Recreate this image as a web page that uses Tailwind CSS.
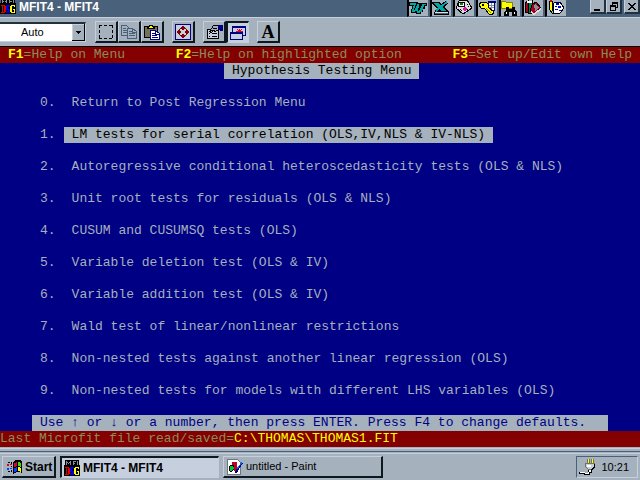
<!DOCTYPE html>
<html lang="en">
<head>
    <meta charset="UTF-8" />
    <meta name="viewport" content="width=device-width, initial-scale=1.0"/>
    <title>MFIT4 - MFIT4</title>
    <script src="https://cdn.jsdelivr.net/npm/@tailwindcss/browser@4"></script>
</head>
<body class="flex min-h-screen flex-col overflow-x-hidden bg-[#a5b1bd] font-['Liberation_Sans',sans-serif] text-[11px] text-black">

<!-- Title bar -->
<header class="flex h-[18px] items-start border-b border-[#c6cfde] bg-[#4a617b]">
    <svg class="h-[14px] w-4 shrink-0" viewBox="0 0 16 14" shape-rendering="crispEdges">
        <path fill="#000" d="M1 0h14v3h1v11H0V3h1z"/>
        <path fill="#84919c" d="M2 0h1v3H2zM3 1h1v1H3zM5 1h1v1H5zM6 0h1v3H6zM9 0h1v3H9zM10 1h2v1h-2zM13 0h1v3h-1z"/>
        <path fill="#e00000" d="M1 5h4v1h1v6H5v1H1v-1h1V6H1zM3 6v6h1V6z"/>
        <path fill="#0000e0" d="M6 5h4v2H8v2h2v4H6v-2h2v-1H6z"/>
        <path fill="#ffff00" d="M11 5h4v2h-1V6h-2v6h2v-2h-1V9h2v4h-4v-1h-1V6h1z"/>
    </svg>
    <h1 class="ml-[3px] grow text-[12px] leading-[14px] font-bold whitespace-nowrap text-white">MFIT4 - MFIT4</h1>

    <nav aria-label="Office shortcuts" class="mr-[22px] flex bg-black">
        <button aria-label="Word" class="h-[17px] w-[23px] border-r-2 border-b border-l-2 border-r-[#4a617b] border-b-[#4a617b] border-l-black bg-[#a5b1bd]">
            <svg class="h-4 w-[19px]" viewBox="0 0 19 16" shape-rendering="crispEdges">
                <path fill="#000" d="M0 2h9v1h9v3h-2v3h-2v3h-2v2H7v-1H2V9h1V6H0z"/>
                <path fill="#00a5a5" d="M1 3h6v2H6v3H5v2h1V8h1V6h1V4h2v4H9v3h1v-1h1V8h1V6h1V4h4v1h-2v2h-1v3h-1v2h-2v1H8v-2H6v1H3V9h1V6h1V5H1z"/>
                <path fill="#a5b1bd" d="M14 13h4v2h-4zM0 7h2v4H0z"/>
            </svg>
        </button>
        <button aria-label="Excel" class="h-[17px] w-[23px] border-r-2 border-b border-l-2 border-r-[#4a617b] border-b-[#4a617b] border-l-black bg-[#a5b1bd]">
            <svg class="h-4 w-[19px]" viewBox="0 0 19 16" shape-rendering="crispEdges">
                <path fill="none" stroke="#000" stroke-width="4" d="M15 2L4 12"/>
                <path fill="#000" d="M0 2h7l3 3 6 6h1v4H2v-3l3-3-5-5z"/>
                <path fill="none" stroke="#00a5a5" stroke-width="2" d="M15 2L4 11"/>
                <path fill="#00a5a5" d="M1 3h5l9 8h-5z"/>
                <path fill="#dedede" d="M3 12h13v2H3z"/>
                <path fill="#4a617b" d="M3 13h13v1H3z"/>
            </svg>
        </button>
        <button aria-label="PowerPoint" class="h-[17px] w-[23px] border-r-2 border-b border-l-2 border-r-[#4a617b] border-b-[#4a617b] border-l-black bg-[#a5b1bd]">
            <svg class="h-4 w-[19px]" viewBox="0 0 19 16" shape-rendering="crispEdges">
                <path fill="#dedede" stroke="#000" d="M4 1l8-1 5 8-9 6-7-6z"/>
                <path fill="#fff" stroke="#000" d="M3.500 2.500h6v4h-6z"/>
                <path fill="#008400" d="M5 3h3v2H5z"/>
                <path fill="#e010b0" d="M8 8h4v2H8zM9 7h2v4H9z"/>
                <path fill="#000" d="M5 9h1v1H5zM6 10h1v1H6zM12 4h1v1h-1zM13 6h1v1h-1zM12 9h1v1h-1zM9 12h1v1H9z"/>
            </svg>
        </button>
        <button aria-label="Access" class="h-[17px] w-[23px] border-r-2 border-b border-l-2 border-r-[#4a617b] border-b-[#4a617b] border-l-black bg-[#a5b1bd]">
            <svg class="h-4 w-[19px]" viewBox="0 0 19 16" shape-rendering="crispEdges">
                <path fill="#fff" stroke="#000080" d="M10.500 2.500h6v8h-6z"/>
                <path fill="#000080" d="M10 1h8v2h-8z"/>
                <path fill="#84919c" d="M11 5h5v1h-5zM11 7h5v1h-5zM13 3h1v7h-1z"/>
                <path fill="#ffff00" stroke="#000" d="M3 2h5l2 2v3l6 5-2 3-3-1-4-5-4-1-2-3z"/>
                <path fill="#000" d="M4 4h2v2H4z"/>
                <path fill="none" stroke="#848400" d="M8 8l5 5"/>
            </svg>
        </button>
        <button aria-label="Find file" class="h-[17px] w-[23px] border-r-2 border-b border-l-2 border-r-[#4a617b] border-b-[#4a617b] border-l-black bg-[#a5b1bd]">
            <svg class="h-4 w-[19px]" viewBox="0 0 19 16" shape-rendering="crispEdges">
                <path fill="#ffff00" stroke="#848400" d="M.5 1.500h4l1 1h6v6H.5z"/>
                <path fill="#000" d="M5 7h3v2h3V7h3v3l2 2v4h-5v-4H8v4H3v-4l2-2z"/>
                <path fill="#fff" d="M5 12h1v2H5zM13 12h1v2h-1z"/>
            </svg>
        </button>
        <button aria-label="Books" class="h-[17px] w-[23px] border-r-2 border-b border-l-2 border-r-[#4a617b] border-b-[#4a617b] border-l-black bg-[#a5b1bd]">
            <svg class="h-4 w-[19px]" viewBox="0 0 19 16" shape-rendering="crispEdges">
                <path fill="#a50021" stroke="#000" d="M1 3l3-2v11l-3 1z"/>
                <path fill="#008442" stroke="#000" d="M4 2l4-1v12H4z"/>
                <path fill="#fff" d="M3 1h5v2H3z"/>
                <path fill="#a50021" stroke="#000" d="M8 5l4-3 5 6-7 6-4-3z"/>
                <path fill="#dedede" d="M7 11l3 2 7-5v2l-7 5-3-2z"/>
                <path fill="#84919c" d="M10 5l2-1 3 4-4 3z"/>
            </svg>
        </button>
        <button aria-label="Notes" class="h-[17px] w-[23px] border-r-2 border-b border-l-2 border-r-[#4a617b] border-b-[#4a617b] border-l-black bg-[#a5b1bd]">
            <svg class="h-4 w-[19px]" viewBox="0 0 19 16" shape-rendering="crispEdges">
                <path fill="#fff" stroke="#000" d="M7 3l6-1 4 6-4 5H6z"/>
                <path fill="#0000d0" d="M9 3h3v2H9zM8 6h2v1H8zM11 6h3v2h-3zM8 9h3v1H8zM12 10h2v1h-2z"/>
                <path fill="#ffff00" stroke="#000" d="M2.500 1.500h3v8l-1 3-2-3z"/>
                <path fill="#d00000" d="M3 0h2v2H3z"/>
            </svg>
        </button>
    </nav>

    <div class="flex h-[14px]">
        <button aria-label="Minimize" class="flex h-[14px] w-4 items-end border-r-2 border-b-2 border-l border-r-[#21313f] border-b-[#21313f] border-l-[#c6cfde] bg-[#a5b1bd] pb-[1px] pl-[3px]">
            <span class="h-[2px] w-[6px] bg-black"></span>
        </button>
        <button aria-label="Restore" class="mr-[2px] h-[14px] w-4 border-r-2 border-b-2 border-l border-r-[#21313f] border-b-[#21313f] border-l-[#c6cfde] bg-[#a5b1bd]">
            <svg class="h-3 w-[13px]" viewBox="0 0 13 12" shape-rendering="crispEdges">
                <path d="M5 2h6v2H5zM5 4h1v1H5zM10 4h1v4h-1zM8 7h2v1H8zM3 5h6v2H3zM3 7h1v4H3zM8 7h1v4H8zM4 10h4v1H4z"/>
            </svg>
        </button>
        <button aria-label="Close" class="h-[14px] w-4 border-r-2 border-b-2 border-l border-r-[#21313f] border-b-[#21313f] border-l-[#c6cfde] bg-[#a5b1bd]">
            <svg class="h-3 w-[13px]" viewBox="0 0 13 12" shape-rendering="crispEdges">
                <path d="M3 3h2v1H3zM9 3h2v1H9zM4 4h2v1H4zM8 4h2v1H8zM5 5h4v1H5zM6 6h2v1H6zM5 7h4v1H5zM4 8h2v1H4zM8 8h2v1H8zM3 9h2v1H3zM9 9h2v1H9z"/>
            </svg>
        </button>
    </div>
</header>

<!-- Toolbar -->
<div class="flex h-[29px] items-center border-b border-black bg-[#a5b1bd]" role="toolbar" aria-label="Window tools">
    <div class="relative h-5 w-[86px] border-t-2 border-r border-b border-t-[#21313f] border-r-[#c6cfde] border-b-[#c6cfde]">
        <select aria-label="Font size" class="h-[17px] w-[85px] appearance-none bg-white pl-[21px] text-[11px] leading-[17px]">
            <option>Auto</option>
            <option>8 x 12</option>
        </select>
        <svg class="pointer-events-none absolute top-0 right-0 h-[17px] w-[13px]" viewBox="0 0 13 17" shape-rendering="crispEdges">
            <path fill="#a5b1bd" d="M0 0h13v17H0z"/>
            <path fill="#c6cfde" d="M0 0h12v1H0zM0 0h1v16H0z"/>
            <path fill="#000" d="M12 0h1v17h-1zM0 16h12v1H0zM4 7h5v1H4zM5 8h3v1H5zM6 9h1v1H6z"/>
        </svg>
    </div>

    <div class="ml-[9px] flex">
        <button aria-label="Mark" class="flex h-[22px] w-[23px] items-center justify-center border-t border-r-2 border-b-2 border-l border-t-[#c6cfde] border-r-[#10181f] border-b-[#10181f] border-l-[#c6cfde]">
            <svg class="h-4 w-4" viewBox="0 0 16 16" shape-rendering="crispEdges">
                <path fill="none" stroke="#000" stroke-dasharray="3 2" d="M1 1.500h14M1 14.500h14M1.500 1v14M14.500 1v14"/>
            </svg>
        </button>
        <button aria-label="Copy" class="flex h-[22px] w-[23px] items-center justify-center border-t border-r-2 border-b-2 border-l border-t-[#c6cfde] border-r-[#10181f] border-b-[#10181f] border-l-[#c6cfde]">
            <svg class="h-4 w-4" viewBox="0 0 16 16" shape-rendering="crispEdges">
                <path fill="#a5b1bd" stroke="#4a617b" d="M.5 1.500h5l3 3v7h-8z"/>
                <path fill="none" stroke="#4a617b" d="M2 4.500h3M2 6.500h5M2 8.500h5"/>
                <path fill="#a5b1bd" stroke="#4a617b" d="M6.500 4.500h5l4 3v7h-9z"/>
                <path fill="none" stroke="#4a617b" d="M8 7.500h3M8 9.500h6M8 11.500h6M11.500 5v3h3"/>
            </svg>
        </button>
        <button aria-label="Paste" class="flex h-[22px] w-[23px] items-center justify-center border-t border-r-2 border-b-2 border-l border-t-[#c6cfde] border-r-[#10181f] border-b-[#10181f] border-l-[#c6cfde]">
            <svg class="h-4 w-4" viewBox="0 0 16 16" shape-rendering="crispEdges">
                <path fill="#73735a" stroke="#000" d="M.5 2.500h13v11H.5z"/>
                <path fill="#ffff00" stroke="#000" d="M3.500 3.500l2-1v-1h3v1l2 1v1h-7z"/>
                <path fill="#fff" stroke="#000080" d="M6.500 6.500h5l4 3v6h-9z"/>
                <path fill="none" stroke="#000080" d="M8 9.500h3M8 11.500h5M8 13.500h6M11.500 7v3h4"/>
            </svg>
        </button>
    </div>

    <button aria-label="Full screen" class="ml-2 flex h-[22px] w-[23px] items-center justify-center border-t border-r-2 border-b-2 border-l border-t-[#c6cfde] border-r-[#10181f] border-b-[#10181f] border-l-[#c6cfde]">
        <svg class="h-4 w-4" viewBox="0 0 16 16" shape-rendering="crispEdges">
            <path fill="#c6cfde" stroke="#000080" d="M.5.5h15v15H.5z"/>
            <path fill="#840000" d="M7 2h2v1H7zM6 3h4v1H6zM5 4h6v1H5zM7 5h2v1H7zM7 13h2v1H7zM6 12h4v1H6zM5 11h6v1H5zM7 10h2v1H7zM2 7h1v2H2zM3 6h1v4H3zM4 5h1v6H4zM5 7h1v2H5zM13 7h1v2h-1zM12 6h1v4h-1zM11 5h1v6h-1zM10 7h1v2h-1z"/>
        </svg>
    </button>

    <div class="ml-2 flex">
        <button aria-label="Properties" class="flex h-[22px] w-[23px] items-center justify-center border-t border-r-2 border-b-2 border-l border-t-[#c6cfde] border-r-[#10181f] border-b-[#10181f] border-l-[#c6cfde]">
            <svg class="h-4 w-[17px]" viewBox="0 0 17 16" shape-rendering="crispEdges">
                <path fill="#c6cfde" stroke="#000" d="M1.500 5.500h11v9h-11z"/>
                <path fill="none" stroke="#000" d="M3 9.500h1M6 9.500h5M3 12.500h1M6 12.500h5"/>
                <path fill="#a5b1bd" stroke="#000" d="M3.500 7.500l4-6h5v4l-3 2-2-1-2 2z"/>
                <path fill="none" stroke="#000" d="M7 4.500h4M5 6.500h4"/>
                <path fill="#000080" d="M12 1h5v6h-2l-3-2z"/>
            </svg>
        </button>
        <button aria-label="Background" aria-pressed="true" class="flex h-[22px] w-[23px] items-center justify-center border-t-2 border-r border-b border-l-2 border-t-[#10181f] border-r-[#c6cfde] border-b-[#c6cfde] border-l-[#10181f] bg-[#c6cfde]">
            <svg class="h-4 w-4" viewBox="0 0 16 16" shape-rendering="crispEdges">
                <path fill="#c6cfde" stroke="#000080" d="M2.500 1.500h13v9h-13z"/>
                <path fill="#000080" d="M2 1h14v2H2z"/>
                <path fill="none" stroke="#e0003c" d="M9.500 4v4M7 4l2 2M12 4l-2 2M6 6.500h7"/>
                <path fill="#c6cfde" stroke="#000080" d="M.5 7.500h12v7H.5z"/>
                <path fill="#000080" d="M0 7h13v2H0z"/>
            </svg>
        </button>
    </div>

    <button aria-label="Font" class="ml-2 flex h-[22px] w-[23px] items-center justify-center border-t border-r-2 border-b-2 border-l border-t-[#c6cfde] border-r-[#10181f] border-b-[#10181f] border-l-[#c6cfde] font-['Liberation_Serif',serif] text-[18px] leading-[18px] font-bold">A</button>
</div>

<!-- Microfit text screen -->
<main class="flex grow flex-col bg-[#000084] font-['Liberation_Mono',monospace] text-[13px] leading-4 whitespace-pre text-[#a5b1bd]">
    <div class="flex h-4 justify-between bg-[#840000] px-2 text-[#8c8c5a]">
        <span><b class="text-[#ffff00]">F1</b>=Help on Menu</span>
        <span><b class="text-[#ffff00]">F2</b>=Help on highlighted option</span>
        <span><b class="text-[#ffff00]">F3</b>=Set up/Edit own Help</span>
    </div>

    <h2 class="ml-56 self-start bg-[#a5b1bd] px-2 text-black">Hypothesis Testing Menu</h2>

    <ul class="mt-4 flex grow flex-col items-start gap-4 pl-10">
        <li class="flex gap-2"><span>0.</span><button class="px-2">Return to Post Regression Menu</button></li>
        <li class="flex gap-2"><span>1.</span><button class="bg-[#a5b1bd] px-2 text-black">LM tests for serial correlation (OLS,IV,NLS &amp; IV-NLS)</button></li>
        <li class="flex gap-2"><span>2.</span><button class="px-2">Autoregressive conditional heteroscedasticity tests (OLS &amp; NLS)</button></li>
        <li class="flex gap-2"><span>3.</span><button class="px-2">Unit root tests for residuals (OLS &amp; NLS)</button></li>
        <li class="flex gap-2"><span>4.</span><button class="px-2">CUSUM and CUSUMSQ tests (OLS)</button></li>
        <li class="flex gap-2"><span>5.</span><button class="px-2">Variable deletion test (OLS &amp; IV)</button></li>
        <li class="flex gap-2"><span>6.</span><button class="px-2">Variable addition test (OLS &amp; IV)</button></li>
        <li class="flex gap-2"><span>7.</span><button class="px-2">Wald test of linear/nonlinear restrictions</button></li>
        <li class="flex gap-2"><span>8.</span><button class="px-2">Non-nested tests against another linear regression (OLS)</button></li>
        <li class="flex gap-2"><span>9.</span><button class="px-2">Non-nested tests for models with different LHS variables (OLS)</button></li>
    </ul>

    <p class="mx-8 h-4 bg-[#a5b1bd] px-2 text-[#000084]">Use ↑ or ↓ or a number, then press ENTER. Press F4 to change defaults.</p>
    <p class="h-4 bg-[#840000] text-[#8c8c5a]">Last Microfit file read/saved=<span class="text-[#ffff00]">C:\THOMAS\THOMAS1.FIT</span></p>
</main>

<!-- Taskbar -->
<footer class="h-[33px] pt-[1px]">
    <div class="h-[3px] border-t border-[#c6cfde]"></div>
    <div class="h-[5px] border-t border-[#4a617b] pt-[1px]"><div class="border-t border-[#c6cfde]"></div></div>
    <div class="flex gap-1 px-[2px]">
        <button class="flex h-[22px] w-[54px] items-center gap-[3px] border-t border-r-2 border-b-2 border-l border-t-[#c6cfde] border-r-[#10181f] border-b-[#10181f] border-l-[#c6cfde] pl-[3px] text-[12px] font-bold">
            <svg class="h-4 w-4 shrink-0" viewBox="0 0 16 16" shape-rendering="crispEdges">
                <path fill="#000" d="M7 3l3-2h3l3 1v12l-2-1h-3l-4 2z"/>
                <path fill="#000" d="M5 3h1v2H5zM5 7h1v1H5zM5 11h1v2H5zM2 3h2v1H2zM2 12h2v1H2z"/>
                <path fill="#e0002c" d="M8 4l3-1v4L8 8zM1 5h2v2H1zM4 5h2v1H4z"/>
                <path fill="#42e000" d="M12 3l3 1v4l-3-1z"/>
                <path fill="#0042ff" d="M8 9l3-1v4l-3 1zM1 9h2v2H1zM4 9h2v1H4z"/>
                <path fill="#ffff00" d="M12 8l3 1v4l-3-1z"/>
            </svg>
            Start
        </button>
        <button aria-pressed="true" class="flex h-[22px] w-[159px] items-center gap-[3px] border-t-2 border-r border-b border-l-2 border-t-[#10181f] border-r-[#c6cfde] border-b-[#c6cfde] border-l-[#10181f] bg-[#c6cfde] pl-[2px] text-[12px] font-bold">
            <svg class="h-4 w-4 shrink-0" viewBox="0 0 16 16" shape-rendering="crispEdges">
                <path fill="#000" d="M1 0h14v5h1v11H0V5h1z"/>
                <path fill="#84919c" d="M2 1h1v4H2zM3 2h1v1H3zM4 3h1v1H4zM5 2h1v1H5zM6 1h1v4H6zM9 1h1v4H9zM10 1h2v1h-2zM10 3h1v1h-1zM13 1h1v4h-1z"/>
                <path fill="#e00000" d="M1 7h4v1h1v6H5v1H1v-1h1V8H1zM3 8v6h1V8z"/>
                <path fill="#0000e0" d="M6 7h4v2H8v2h2v4H6v-2h2v-1H6z"/>
                <path fill="#ffff00" d="M11 7h4v2h-1V8h-2v6h2v-2h-1v-1h2v4h-4v-1h-1V8h1z"/>
            </svg>
            MFIT4 - MFIT4
        </button>
        <button class="flex h-[22px] w-40 items-center gap-[3px] border-t border-r-2 border-b-2 border-l border-t-[#c6cfde] border-r-[#10181f] border-b-[#10181f] border-l-[#c6cfde] pl-[3px]">
            <svg class="h-4 w-4 shrink-0" viewBox="0 0 16 16" shape-rendering="crispEdges">
                <path fill="#fff" stroke="#73737b" d="M.5.500h10l3 3v12H.5z"/>
                <path fill="#c00020" d="M5 3h5v5H5z"/>
                <path fill="#00c03c" stroke="#000" d="M2 8l2-2h2l1 2v2l-2 2H3l-1-2z"/>
                <path fill="#c00020" d="M7 8h3l1 4H7z"/>
                <path fill="none" stroke="#000084" stroke-width="2" d="M15 4L10 11l-1 3"/>
                <path fill="none" stroke="#0063ff" d="M15 3l-5 7"/>
            </svg>
            untitled - Paint
        </button>
        <div class="ml-auto flex h-[22px] w-[62px] items-center justify-between border border-t-[#4a617b] border-r-[#c6cfde] border-b-[#c6cfde] border-l-[#4a617b] pr-2 pl-[2px]">
            <svg class="h-4 w-4" viewBox="0 0 16 16" shape-rendering="crispEdges">
                <path fill="#73735a" d="M8 0h3v4H8zM12 0h3v4h-3z"/>
                <path fill="#ffff00" d="M9 0h1v4H9zM13 0h1v4h-1z"/>
                <path fill="#c6cfde" stroke="#73735a" d="M6.500 4.500h9v3l-2 3h-4l-3-3z"/>
                <path fill="#fff" d="M8 6h4v2H8z"/>
                <path fill="none" stroke="#000" d="M15.500 5v3l-3 3"/>
                <path fill="#000" d="M9 11h4v3h-2v2H5v-1H0v-2h6v1h3z"/>
                <path fill="#fff" d="M10 11h2v2h-2v2H6v-1H1v-1h5v1h3v-1h1z"/>
            </svg>
            <time>10:21</time>
        </div>
    </div>
</footer>
</body>
</html>
